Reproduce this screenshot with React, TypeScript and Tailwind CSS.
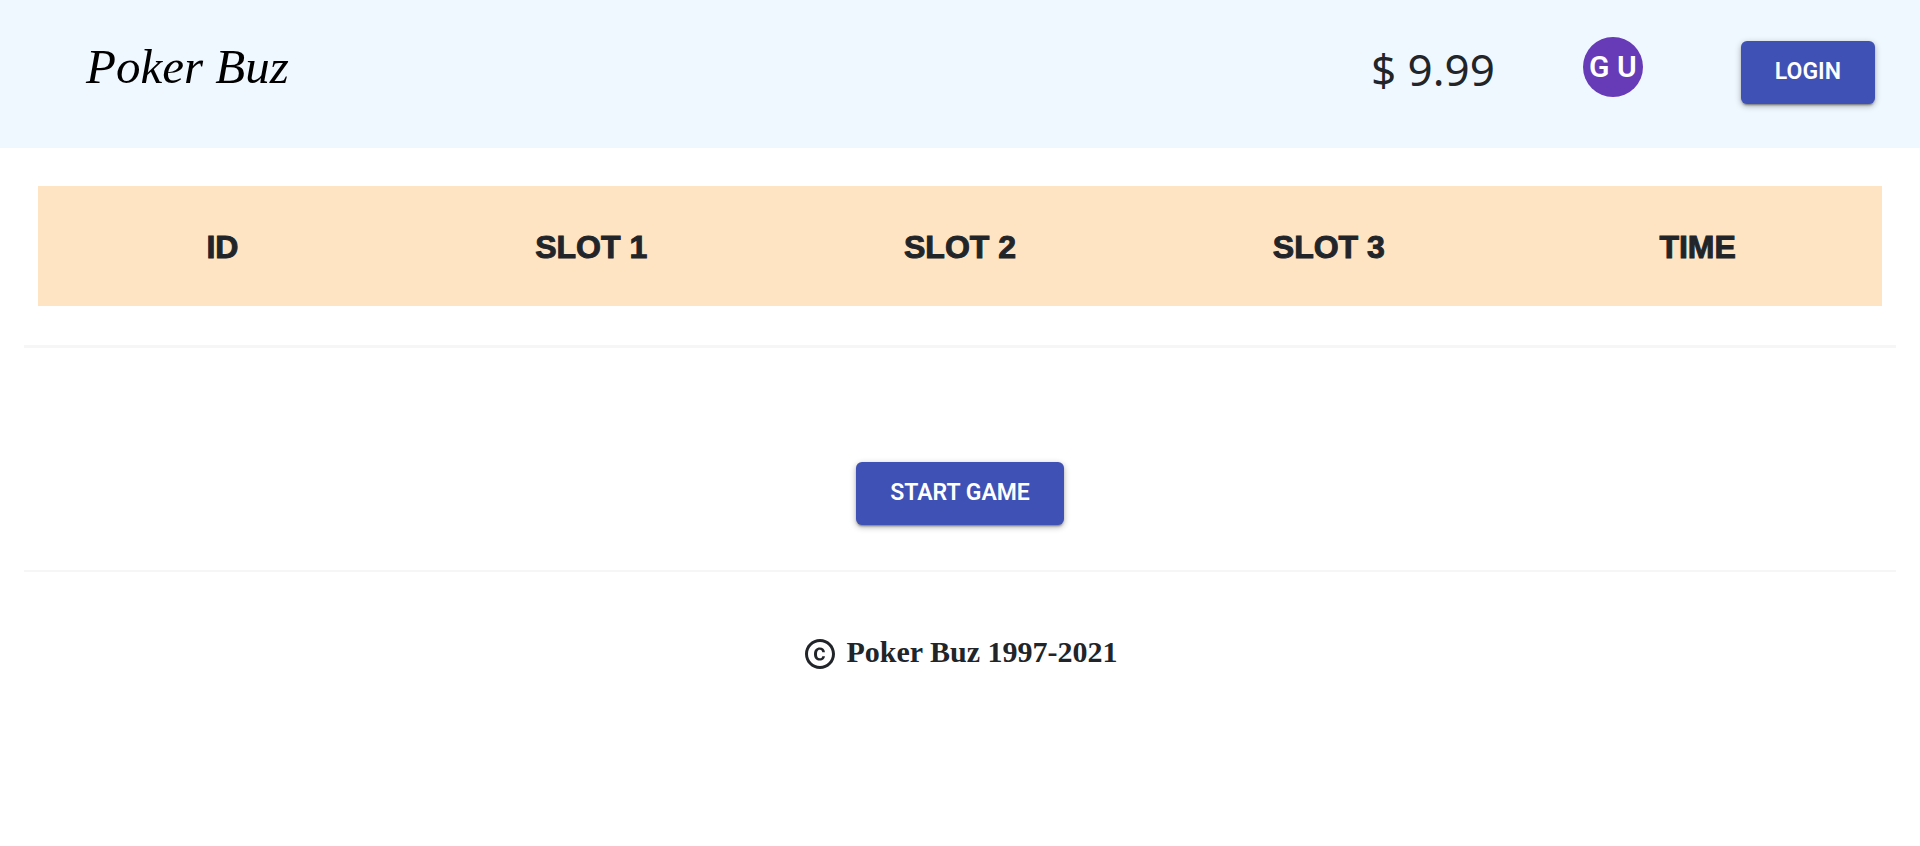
import { MdCopyright } from "react-icons/md";

const columns = ["ID", "SLOT 1", "SLOT 2", "SLOT 3", "TIME"];

const buttonClass =
  "rounded-md bg-[#3f51b5] px-[34px] pt-[11px] pb-3 text-[23px] leading-10 font-semibold text-white font-['Roboto',sans-serif] shadow-[0_3px_1px_-2px_rgba(0,0,0,0.2),0_2px_2px_0_rgba(0,0,0,0.14),0_2px_6px_0_rgba(0,0,0,0.3)]";

function Header() {
  return (
    <header className="flex items-start justify-between bg-[#f0f8ff] pt-[37px] pr-[45px] pb-11 pl-[86px]">
      <a
        href="#"
        className="font-['Liberation_Serif',serif] text-[49px] leading-[60px] text-black italic"
      >
        Poker Buz
      </a>
      <div className="flex items-start">
        <span className="mr-[88px] pt-0.5 font-['Noto_Sans',sans-serif] text-[44px] leading-[60px]">
          $ 9.99
        </span>
        <span className="mr-[98px] flex size-[60px] items-center justify-center rounded-full bg-[#673ab7] font-['Roboto',sans-serif] text-[30px] leading-10 font-semibold whitespace-nowrap text-white">
          G U
        </span>
        <div className="pt-1">
          <button type="button" className={buttonClass}>
            LOGIN
          </button>
        </div>
      </div>
    </header>
  );
}

export default function App() {
  return (
    <div className="min-h-screen bg-white text-[#212529]">
      <Header />
      <main className="px-6">
        <div className="px-[14px] pt-[38px] pb-[39px]">
          <table className="w-full table-fixed bg-[#ffe4c4]">
            <thead>
              <tr>
                {columns.map((name) => (
                  <th
                    key={name}
                    scope="col"
                    className="h-[120px] pt-0.5 font-['Liberation_Sans',sans-serif] text-[32px] leading-10 font-bold [-webkit-text-stroke:1px_currentColor]"
                  >
                    {name}
                  </th>
                ))}
              </tr>
            </thead>
          </table>
        </div>
        <hr className="border-t-3 border-[#f6f6f6]" />
        <div className="flex justify-center pt-[114px] pb-[45px]">
          <button type="button" className={buttonClass}>
            START GAME
          </button>
        </div>
        <hr className="border-t-2 border-[#f6f6f6]" />
      </main>
      <footer className="flex items-center justify-center gap-2 pt-[60px] font-['Liberation_Serif',serif] text-[30px] leading-10 font-bold">
        <MdCopyright className="mt-1 size-9" aria-hidden="true" />
        <span>Poker Buz 1997-2021</span>
      </footer>
    </div>
  );
}
